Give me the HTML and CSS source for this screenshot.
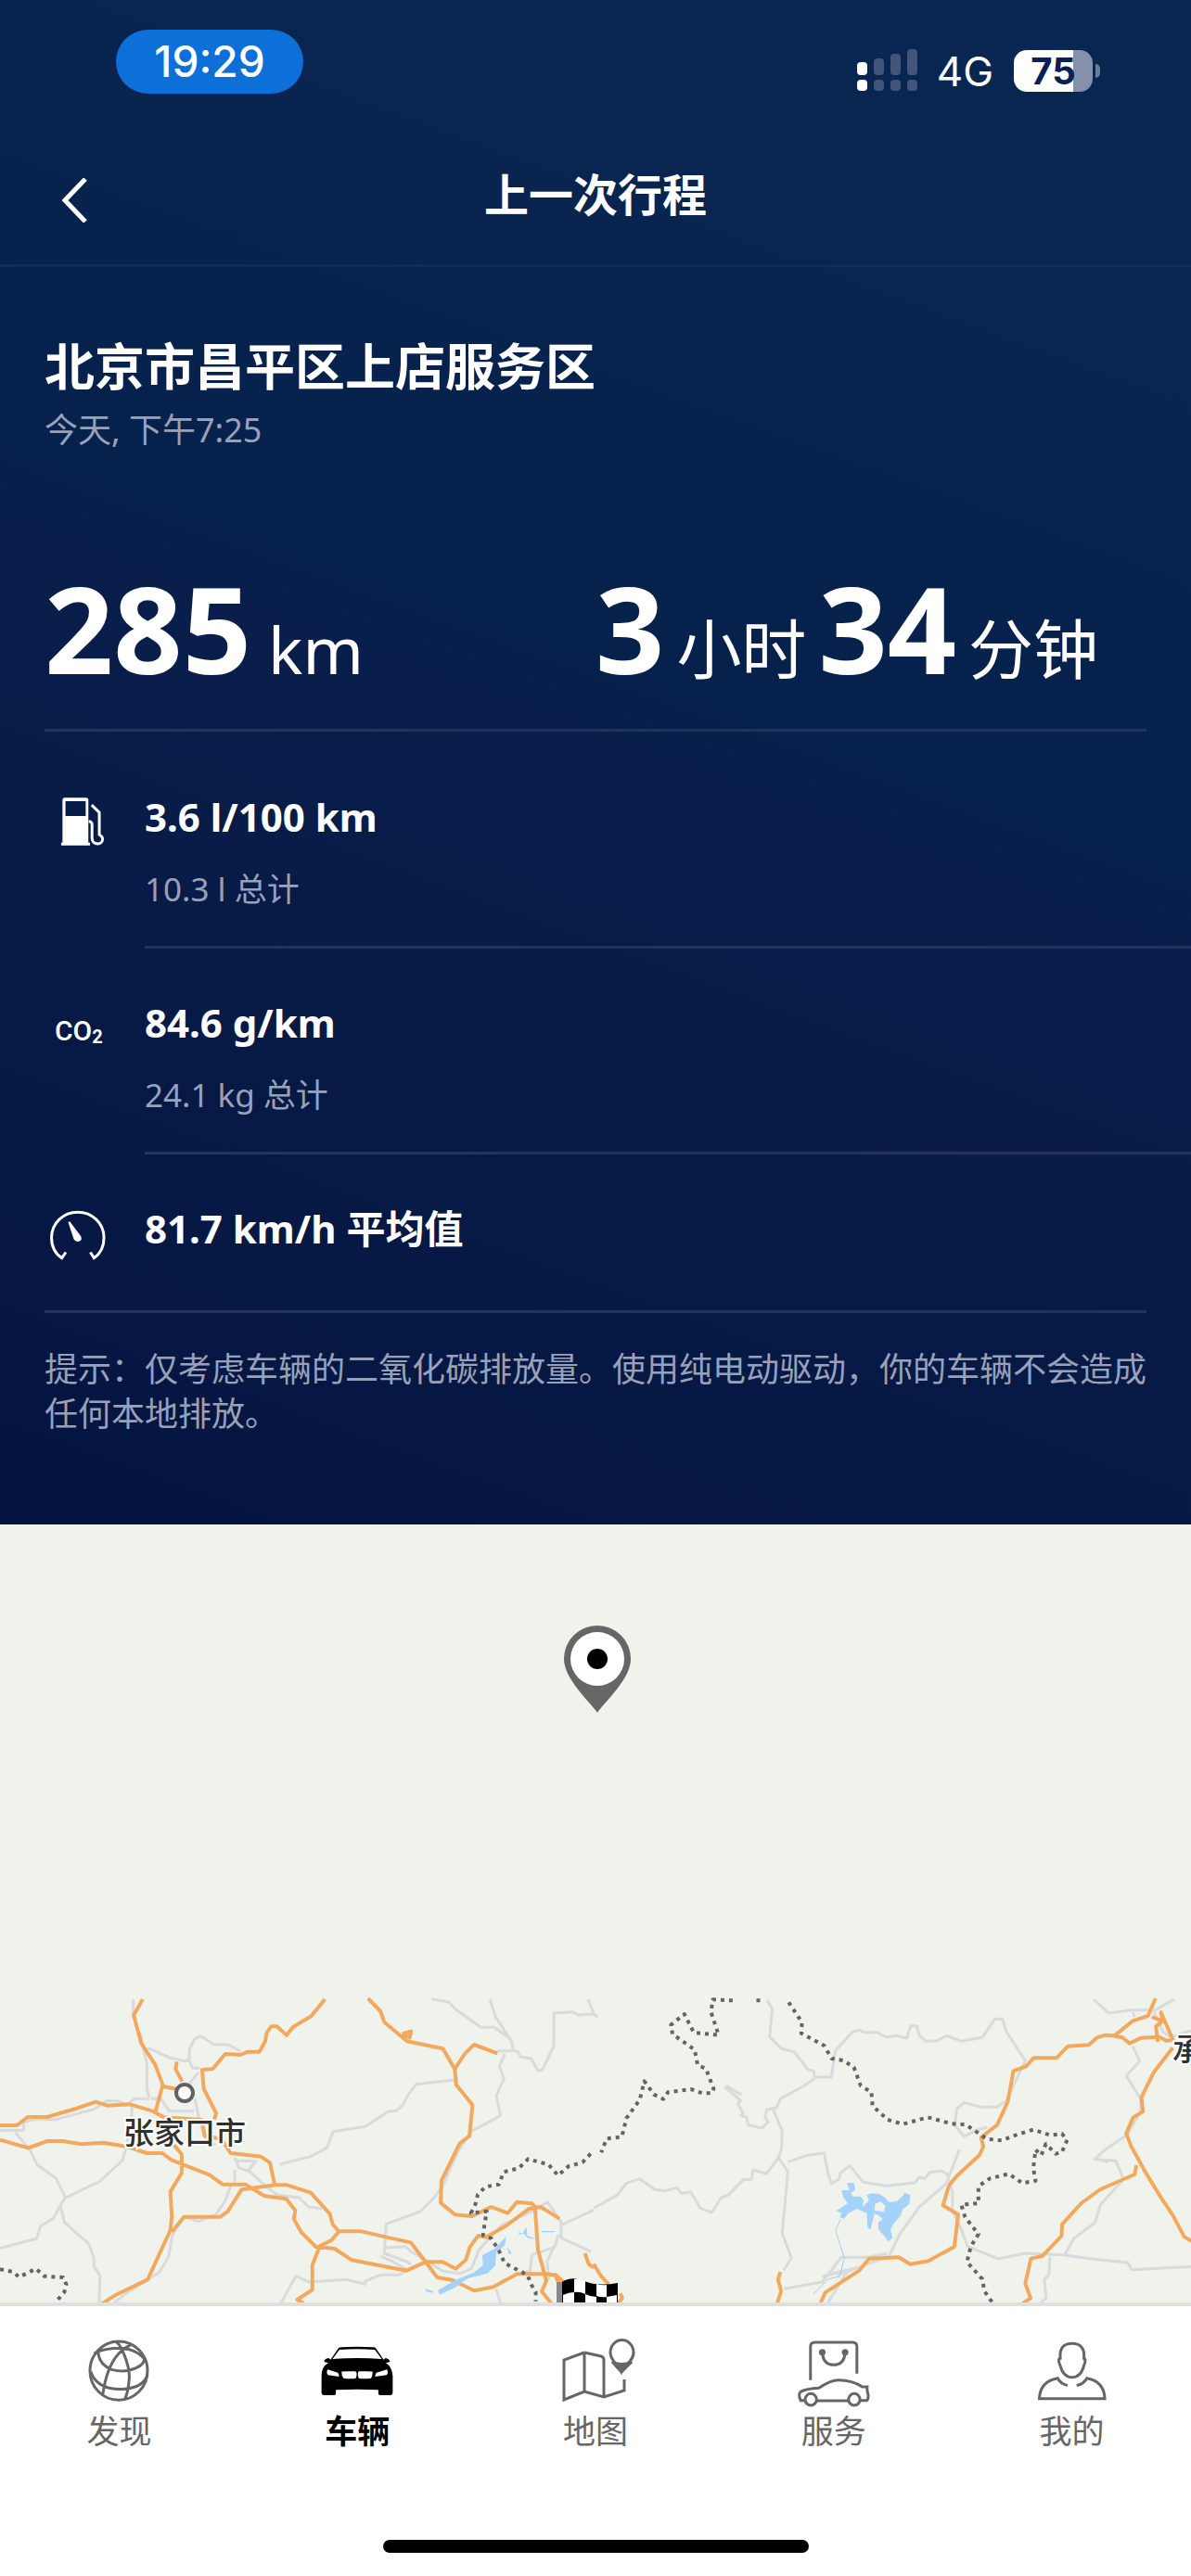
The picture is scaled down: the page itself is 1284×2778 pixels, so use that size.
FILE: index.html
```html
<!DOCTYPE html>
<html lang="zh-CN">
<head>
<meta charset="utf-8">
<meta name="viewport" content="width=device-width, initial-scale=1">
<title>上一次行程</title>
<link rel="stylesheet" href="styles.css">
</head>
<body>
<main class="trip">
  <div class="status">
    <span class="status-time">19:29</span>
    <div class="status-right">
      <svg class="signal" viewBox="0 0 66 46" aria-hidden="true">
        <g fill="#fff"><rect x="0" y="14" width="11" height="14" rx="4"/><rect x="0" y="33" width="11" height="12" rx="4"/></g>
        <g fill="#42557a"><rect x="18" y="10" width="11" height="18" rx="4"/><rect x="36" y="5" width="11" height="23" rx="4"/><rect x="54" y="0" width="11" height="28" rx="4"/><rect x="18" y="33" width="11" height="12" rx="4"/><rect x="36" y="33" width="11" height="12" rx="4"/><rect x="54" y="33" width="11" height="12" rx="4"/></g>
      </svg>
      <span class="network">4G</span>
      <span class="battery">75</span>
    </div>
  </div>

  <header class="bar">
    <button class="back" type="button" aria-label="返回">
      <svg viewBox="0 0 28 48" aria-hidden="true"><path d="M25 1 3 24 25 47" fill="none" stroke="#fff" stroke-width="5"/></svg>
    </button>
    <h1 class="bar-title">上一次行程</h1>
  </header>

  <section class="place">
    <h2 class="place-name">北京市昌平区上店服务区</h2>
    <p class="place-time">今天, 下午7:25</p>
  </section>

  <section class="totals">
    <p class="total"><b>285</b><span>km</span></p>
    <p class="total duration"><b>3</b><span>小时</span><b>34</b><span>分钟</span></p>
  </section>

  <ul class="facts">
    <li class="fact">
      <svg class="fact-icon" viewBox="146 89 179 167" preserveAspectRatio="none" aria-hidden="true">
        <path fill="#fff" fill-rule="evenodd" d="M189 232V112q0-7 7-7h64q7 0 7 7v120h5v8H185v-8zM198 115v42h61v-42z"/>
        <path class="line" d="M277 126l23 21v62q10 6 10 13c0 7-6 13-15 13s-17-6-17-16v-38q0-8-10-9"/>
      </svg>
      <div class="fact-body">
        <p class="fact-value">3.6 l/100 km</p>
        <p class="fact-note">10.3 l 总计</p>
      </div>
    </li>
    <li class="fact">
      <span class="fact-icon co2">CO<small>2</small></span>
      <div class="fact-body">
        <p class="fact-value">84.6 g/km</p>
        <p class="fact-note">24.1 kg 总计</p>
      </div>
    </li>
    <li class="fact">
      <svg class="fact-icon" viewBox="146 1249 179 167" preserveAspectRatio="none" aria-hidden="true">
        <path class="line" d="M199 1386l-12 16c-20-12-31-33-31-57 0-41 35-72 79-72s79 31 79 72c0 24-11 45-30 57l-11-16"/>
        <path fill="#fff" d="M206 1301l5-2 32 40q7 10-1 15-12 6-19-5z"/>
      </svg>
      <div class="fact-body">
        <p class="fact-value">81.7 km/h 平均值</p>
      </div>
    </li>
  </ul>

  <p class="hint">提示：仅考虑车辆的二氧化碳排放量。使用纯电动驱动，你的车辆不会造成任何本地排放。</p>
</main>

<section class="map" aria-label="行程地图">
  <svg class="pin" viewBox="0 0 72 94" aria-hidden="true">
    <path d="M36 94C28 82 0 58 0 36a36 36 0 0 1 72 0C72 58 44 82 36 94z" fill="#666"/>
    <circle cx="36" cy="36" r="29" fill="#fff"/><circle cx="36" cy="36" r="11" fill="#000"/>
  </svg>
  <svg class="roads" viewBox="0 0 1284 343" aria-hidden="true">
    <g transform="scale(.40816 .33333)">
      <g class="minor">
        <path d="M352 48v50M370 155l10 60 8 40v80l6 33M390 205l60 33 40 10 10-5V210l15-35 15-8 35 27 40 2 30 20M498 240l10 30 20 2M525 285l-25 35M395 370h-40l-20 20-20-12-32-2-35 28-100 33h-60l-25 10v25H0M400 370h25l22 40h65M515 370l10 60 15 65 30 25M348 390v40l-15 100-10 40-60 68-90 52-25-62-50-45-18-45-40-60M172 690l-15 30-15 35-35 27-10 40-97 32M160 715l10 55 65 70 13 45v28l16 28-2 90M620 560l10 32 25 12 20-32-55-2M655 600l35 40 40 40 60 10 25 30 35 5M620 600v40M610 650l-15 50-25 45-45 22-40-15-30 60-10 70-25 50-90 70-30 30M740 582l80-25 43-28 17-53 85-16 60-48 22-3 18-20 12-30 22-36 100-14"/>
        <path d="M1140 47l45 10 20 25 65 57h35l47 40M1294 48l15 57 42 80 5 30h10l10 20 27 5 18 40 12-4 30-78V93l50-4 15 10 40-4M1553 48l15 45M1315 215h40M1333 225l-14 40 12 40-20 55 11 65-77 50-35 65-40 110-20 35-40 50-90 40-5 95 60 27 10 10M1005 880l30 15 40 28-20 17h-50l-40 20v10l-50-15-100 8-33-20-40 88M1020 852l50-4 15 15 85 65 45 8 30-17 20-60 60-80 60-32 62-42 20 37 15 28v50l80 45M1480 780l88-50M1475 810l-10 40-60 25-5 55-15 0M1465 845l-20 50 5 60M1310 985l12 46"/>
      </g>
      <g class="major">
        <path d="M377 48l-24 52 20 90 37 70 20 65-20 90M430 330l35 8M467 250l-3 24 17 40M858 48l-36 55-48 35-17 26-26-28h-15l-12 22-3 25-16 35h-30l-20 10-40-3-33 48-28 4 4 60 33 80-5 20M0 456h45l28-27h52l75-27 53-22 30 12 60-4 60 22 30 20 100 8 8 52 43 10 25 46 80 11 24 20 13 73"/>
        <path d="M0 503l75 26 50-22h40l50 10 58-5 60 12 55 22h40l25 22 100 48 35 31h60l50 37 58 10 24 37-4 28 20 43 38 47 50 6 45 37 145 34 50-28h45l35 22 27-30 10-40 22-37 20 5 55-38 60-55 30-5 50 38M460 520l20 30v60l-30 60 4 80-4 45-60 160-85 50-35 28M454 800l32-48h96l20-18 36-70 90-15h30l63 25 50 68 8 35 16 22h60l55 16 75 20 70 113 38 8 60 35 50-12 63-42h75l28 4 20 22M895 800l-20 28-30 18-20 62v80l-40 32 16 11"/>
        <path d="M972 45l33 42 10 35 60 62 95 24 31 66 27-50 24-29 62 28M1062 160l24-8-4 20-20-12M1201 270l4 55 43 65-8 100-26 25-48 120-2 72 38 38 45 5 50-30 44 20 24-36 40 5 8 10 8 140 22 100-12 35 40 60M1465 935l15 45M1545 870l10 35 13 12"/>
      </g>
      <g fill="#a5d2fa">
        <path d="M1337 815l-4 30-22 20-3 45-20 25-52 16-35 30-40 23-4-14 45-33 50-25 24-24-2-32 32-20z"/>
        <path d="M1125 985l20 8-2 5-18-5zM1430 798h35v4h-35zM1370 800l10 6 10-22 3 30 26 10-24-3-12-14-12 2zM1340 850l12 20-8 3z"/>
      </g>
      <path class="border" d="M0 922l35 8 15 17 45-27 22 24 50 4 8 22-5 25-25 36M1560 548l-20 26-24 10-14 4-28 30-25-35-54-18-25 30-40 12-12 40-36 8-20 25-6 30-12 30 42-6-6 40-4 38 22 10 20 40 15 40 60 38 12 35 10 20v30"/>
    </g>
    <g transform="translate(640 0) scale(.41071 .33333)">
      <g class="minor">
        <path d="M0 95l10 10M455 50l14 30-7 90 30 37 35 12 35 56 15 5 3 20h44l10-85 45-60 18-8 12 8h34l25 16 28-5 26 8 10-40h16l6 30 18 20 30-2 24-16 40 18 54-12 33-60h20l10 40 50 95-50 130-25 20h-40l-45-15-20 20-5 55 25 35 30-20 30-10M960 535l-35 110-70 75-50 85-30 75-135 60M580 305l-30 25-60 40-10 30-25 5-5 25 8 15-16 20-36-10-4-25-14-6 4-10-14-28 8-10-42-45M470 400l25 75-2 60-10 30-30 47-35-12-3 30-22 2-40 50-18 8-25 48-30-14-25-52-25 4-12-18-30 10-27-4-40-35-35 14-25 40-60 40M485 560l25 45-15 200 24 80-20 40M510 575l50-22 45-7 10 65 10 33 20-15 3-20 25-22 35 53 60 12 75-10 12-18 15 4 12-20 30-5 15 10 15 60v60l20 50 20 65 80 40 70-18 100 5 90 15 80 10 10 23 160-10M500 985l100-22 50-80 70 0 50-12M600 945l110-35M665 930l-50 100M348 328l40 30"/>
        <path d="M1312 48l40 45 60-10 62 0 50-35M1470 85l25 70 20 15 53-20M1415 90l5 15M1415 200l18 48-35 48 38 75v40l-35 75-60 50-25 30 55 5 20 60-60 80-15 60-55 50-25 55M1198 880l-3 60-12 15 5 60-15 15M1320 565l30 10"/>
      </g>
      <g class="major">
        <path d="M1475 45l-20 57-40 16-48 48-25-2-22 9-20 23-55 4-30 38h-60l-20 27-33 15-15 100-28 75-42 40 6 30-10 27-60 68-20 30-16 65 40 30-10 103-68 47-48 10-30-22-78 4-25 38-90 72-12 32M1367 168l20 3 20 20 30-18 48-3 18 12 18-2-32-90 5 28-18 18 5 50M1465 105l25 12M1520 205l-50 80-32 80 4 46-26 20-18 50 12 40 40 90 40 80 30 55 30 70 20 15M1425 585l-5 30-90 48-50 45-50 68-2 38-50 65-30 8-15 80 14 48-20 17M490 930l-6 25 8 38-10 38M0 905l20 40 20 25M70 1000l5 15-10 15"/>
      </g>
      <path fill="#a5d2fa" d="M665 642h18l4 22-12 12 6 10h20l8 14-4 20 18-20-6-18 12-6 20 2 14 10 12 16 20-2 14-14 8-14 14 8-2 28-18 18-6 22-18 24-8 22 6 24-12 12-10-18-16-22v-22l12-10-12-14-10-4-10 50-8-4-2-48-26-14-22 14-12 18-10-4 4-14-14-8 30-24-12-20-4-22h20zM738 712v20l24 4 4-20-14-14z" fill-rule="evenodd"/>
      <path class="stream" d="M648 760l-13 35 15 60 8 30-12 60-30 8-40 50"/>
      <path class="border" d="M437 52l-12 0M365 52l-52-3-5 40 20 75-65-8-25-60-35 35 4 30 58 50 8 50 22 12 20 65-5 14h-25l-30-13-60 10-12 22-25-15-25-43-12 60-35 60-12 60-40 6-14 45M512 58l35 65-2 35 60 40 20 42 30 6 28 22 18 60 28 20 3 45 40 45 40 14 65-22 60 20 40 4 55 46 40 5 30-15 52-20 45 18 30-5 14 20-14 40-16 5-26-32-12 37-15-18-6 60 6 40-35 8-35-30-50 15-30 25v55l-45 5 10 40 35 55-20 40-10 50 40 55 6 40 20 35"/>
    </g>
    <circle cx="199" cy="117" r="9" fill="#fff" stroke="#626262" stroke-width="4"/>
    <text class="city" x="133" y="172">张家口市</text>
    <text class="city" x="1264" y="82">承</text>
    <g transform="translate(600 317)">
      <path d="M0 4h7v22H0z" fill="#85888e"/>
      <path d="M6 4Q16-3 30 3T66 5V26H6z" fill="#000"/>
      <path d="M19 1q7-1 12 2v14q-6-3-12-2zM43 6q7 2 11 1v13q-6 1-11-1zM7 18q6-3 12-3v11H7zM31 17q6 3 12 3v6H31zM54 20l11-2v8H54z" fill="#fff"/>
    </g>
  </svg>
</section>

<footer class="dock">
  <nav class="tabs">
    <a class="tab" href="#discover">
      <svg class="tab-icon" viewBox="217 150 196 240" preserveAspectRatio="none" aria-hidden="true"><ellipse cx="315" cy="260" rx="76" ry="95"/><path d="M309 167q10 10 14 24 20 50 20 90-2 45-12 72M348 176q-60 30-75 160M250 204q25-17 73-17 40 5 59 34M261 198q0 40 35 58 35 12 65-5 22-12 22-32M241 262q10 40 46 53 42 12 78-6 20-13 26-36"/></svg>
      <span>发现</span>
    </a>
    <a class="tab active" href="#vehicle" aria-current="page">
      <svg class="tab-icon solid" viewBox="846 150 196 240" preserveAspectRatio="none" aria-hidden="true"><path fill-rule="evenodd" d="M874 224l20-36q2-4 8-4 42-3 84 0 6 0 8 4l20 36 5-5q10 2 12 12l-11 4q16 12 18 42v54q0 8-7 8h-24q-7 0-7-7v-10q-56-4-112 0v10q0 7-7 7h-24q-7 0-7-8v-54q0-30 18-42l-11-4q0-10 12-12zM879 222q65-6 130 0l-18-30q-47-4-94 0zM866 256q-4 10 1 18l29 5q1-6-3-13zM1023 256q4 10-1 18l-30 5q-1-6 3-13zM903 263q3-2 36-1 4 1 4 8 0 10-3 15-18 2-32-1-5-7-5-21zM985 263q-3-2-36-1-3 1-3 8 0 10 3 15 18 2 32-1 4-7 4-21z"/></svg>
      <span>车辆</span>
    </a>
    <a class="tab" href="#map">
      <svg class="tab-icon" viewBox="0 0 80 80" aria-hidden="true"><path d="M28 17 6 25v43l22-9 21 6 22-7V46M28 17v42M28 17l18 4q3 1 3 4v40"/><path d="M68 37c-2-6-12-10-12-20a12 13 0 0 1 25 0c0 10-11 14-13 20z"/><path class="fill" d="M58 27q10 5 21 0l-11 11z"/></svg>
      <span>地图</span>
    </a>
    <a class="tab" href="#service">
      <svg class="tab-icon" viewBox="533 150 195 240" preserveAspectRatio="none" aria-hidden="true"><path d="M569 290V182q0-14 12-14h98q12 0 12 14v87M600 200q2 41 30 41t30-41M554 356h-11q-7-21 0-28 15-10 48-12 30-26 52-26 36 0 62 22h13q-1 14 3 27 0 14-4 17h-17M586 357h82"/><ellipse cx="570" cy="353" rx="15" ry="19"/><ellipse cx="684" cy="353" rx="15" ry="19"/><ellipse class="fill" cx="600" cy="200" rx="5" ry="6"/><ellipse class="fill" cx="660" cy="200" rx="5" ry="6"/></svg>
      <span>服务</span>
    </a>
    <a class="tab" href="#profile">
      <svg class="tab-icon" viewBox="1158 150 195 240" preserveAspectRatio="none" aria-hidden="true"><path d="M1224 220q-4-48 31-48t31 48q7 2 0 24-8 37-31 37t-31-37q-8-22 0-24zM1243 308q-20-7-26-24-46 10-48 66h172q-2-56-47-66-8 18-27 24"/></svg>
      <span>我的</span>
    </a>
  </nav>
  <div class="home"></div>
</footer>
</body>
</html>
```
FILE: styles.css
```css
* { box-sizing: border-box; }

body {
  margin: 0;
  min-height: 100vh;
  display: flex;
  flex-direction: column;
  background: #fff;
  font-family: "Noto Sans", "Noto Sans CJK SC", sans-serif;
}

h1, h2, p, ul { margin: 0; padding: 0; }
ul { list-style: none; }

.trip {
  color: #fff;
  background: linear-gradient(200deg, #0a2753 0%, #06214b 45%, #091e4a 49%, #051742 88%, #04123f 100%);
  padding-bottom: 95px;
}

/* Status bar */
.status {
  display: flex;
  justify-content: space-between;
  align-items: flex-start;
  padding: 32px 106px 0 125px;
  height: 134px;
  font-family: Inter, "Liberation Sans", sans-serif;
}
.status-time {
  width: 202px;
  line-height: 69px;
  border-radius: 35px;
  background: #0d70d8;
  text-align: center;
  font-size: 46px;
  font-weight: 500;
}
.status-right {
  display: flex;
  align-items: center;
  height: 88px;
}
.signal { width: 66px; height: 46px; }
.network { margin: 2px 22px 0 20px; font-size: 44px; line-height: 44px; }
.battery {
  position: relative;
  width: 85px;
  height: 45px;
  border-radius: 14px;
  background: linear-gradient(90deg, #fff 75%, #8591aa 75%);
  color: #08214e;
  text-align: center;
  font-size: 40px;
  line-height: 45px;
  font-weight: 700;
}
.battery::after {
  content: "";
  position: absolute;
  left: 88px;
  top: 15px;
  width: 5px;
  height: 15px;
  border-radius: 0 8px 8px 0;
  background: #6d7b97;
}

/* Title bar */
.bar {
  display: grid;
  grid-template-columns: 160px 1fr 160px;
  align-items: center;
  height: 154px;
  border-bottom: 3px solid #142a57;
}
.back {
  display: flex;
  padding: 12px 0 0 67px;
  border: 0;
  background: none;
}
.back svg { width: 28px; height: 48px; }
.bar-title { text-align: center; font-size: 48px; font-weight: 700; line-height: 64px; }

/* Destination */
.place { padding: 75px 48px 0; }
.place-name { font-size: 54px; line-height: 64px; font-weight: 700; }
.place-time { margin-top: 13px; font-size: 36px; line-height: 48px; color: #98a1b9; }

/* Distance and duration */
.totals {
  display: grid;
  grid-template-columns: 1fr 1fr;
  margin: 124px 48px 0;
  padding-bottom: 44px;
  border-bottom: 3px solid #22335d;
}
.total { display: flex; align-items: baseline; gap: 18px; white-space: nowrap; }
.duration { gap: 13px; }
.total b { font-size: 130px; line-height: 130px; font-weight: 700; }
.total span { font-size: 70px; line-height: 72px; }

/* Figures */
.facts {
  margin: 0 0 37px 48px;
  padding-top: 12px;
}
.fact {
  display: grid;
  grid-template-columns: 108px 1fr;
}
.fact-icon { margin: 53px 0 0 4px; width: 64px; height: 64px; }
.line { fill: none; stroke: #fff; stroke-width: 3; vector-effect: non-scaling-stroke; }
.co2 {
  font-family: "Liberation Sans Narrow", Roboto, sans-serif;
  font-size: 30px;
  font-weight: 500;
  line-height: 72px;
  padding-left: 7px;
}
.co2 small { font-size: 20px; font-weight: 700; vertical-align: -3px; }
.fact-body { padding: 52px 0 37px; border-bottom: 3px solid #22335d; }
.fact-value { font-size: 42px; line-height: 56px; font-weight: 700; }
.fact-note { margin-top: 26px; font-size: 35px; line-height: 48px; color: #98a1b9; }
.fact:last-child { margin-right: 48px; border-bottom: 3px solid #22335d; }
.fact:last-child .fact-body { border: 0; padding-bottom: 60px; }

.hint { margin: 0 48px; font-size: 36px; line-height: 48px; color: #98a1b9; }

/* Map */
.map {
  position: relative;
  flex: 1;
  min-height: 640px;
  display: flex;
  align-items: flex-end;
  background: #f0f3ec;
}
.pin { position: absolute; left: calc(50% - 34px); top: 109px; width: 72px; height: 94px; }
.roads { display: block; width: 100%; }
.minor path, .major path, .border, .stream { fill: none; vector-effect: non-scaling-stroke; stroke-linejoin: round; }
.minor path { stroke: #d8dadb; stroke-width: 3; }
.major path { stroke: #f2a95d; stroke-width: 4; }
.border { stroke: #646464; stroke-width: 4; stroke-dasharray: 4 5; }
.stream { stroke: #a9cbe8; stroke-width: 1; }
.city {
  font-size: 33px;
  font-weight: 500;
  fill: #303030;
  stroke: #fff;
  stroke-width: 4;
  paint-order: stroke;
}

/* Bottom navigation */
.dock { border-top: 4px solid #dedfdf; background: #fff; padding: 33px 0 25px; }
.tabs { display: grid; grid-template-columns: repeat(5, 1fr); }
.tab {
  display: flex;
  flex-direction: column;
  align-items: center;
  color: #666;
  text-decoration: none;
  font-size: 35px;
  line-height: 44px;
  font-weight: 400;
}
.tab-icon {
  width: 80px;
  height: 80px;
  overflow: visible;
  fill: none;
  stroke: #666;
  stroke-width: 3;
}
.tab-icon * { vector-effect: non-scaling-stroke; }
.tab-icon .fill { fill: #666; }
.tab-icon.solid { fill: #000; stroke: none; }
.tab.active { color: #000; font-weight: 700; }
.home { width: 459px; height: 14px; margin: 95px auto 0; border-radius: 7px; background: #000; }
```
